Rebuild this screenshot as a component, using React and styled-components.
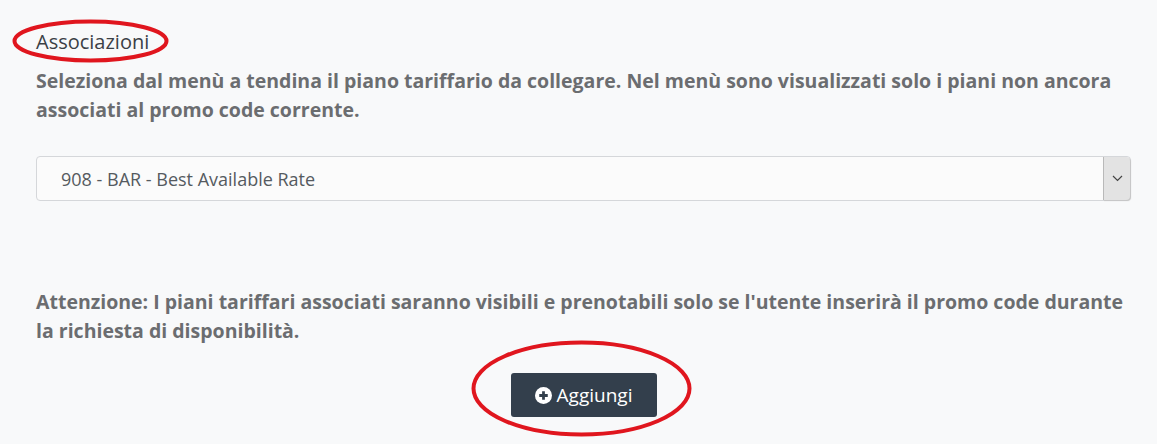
import * as React from "react";
import styled, { createGlobalStyle } from "styled-components";

const GlobalStyle = createGlobalStyle`
  html, body {
    margin: 0;
    padding: 0;
    background-color: #f8f9fa;
  }
  body {
    font-family: "Open Sans", "DejaVu Sans", sans-serif;
  }
`;

const Page = styled.div`
  position: relative;
  width: 1157px;
  height: 444px;
  box-sizing: border-box;
  padding: 27px 26px 0 36px;
  overflow: hidden;
`;

const Title = styled.h4`
  margin: 0 0 10px 0;
  font-size: 20px;
  font-weight: 400;
  line-height: 29px;
  color: #3b4046;
`;

const Note = styled.p`
  margin: ${(props) => props.margin || "0"};
  font-size: 19.5px;
  font-weight: 700;
  line-height: 29px;
  color: #6b6d70;
`;

const SelectWrap = styled.div`
  display: flex;
  margin-top: 32px;
  height: 45px;
  border: 1px solid #d5d7da;
  border-radius: 4px;
  background-color: #fbfbfb;
  box-sizing: border-box;
`;

const SelectValue = styled.div`
  flex: 1;
  display: flex;
  align-items: center;
  padding-left: 24px;
  font-size: 18px;
  color: #555a5f;
`;

const SelectArrow = styled.div`
  width: 26px;
  display: flex;
  align-items: center;
  justify-content: center;
  background-color: #e3e3e3;
  border-left: 1px solid #b9b9b9;
  border-radius: 0 4px 4px 0;
  box-shadow: 1px 1px 1px #c6c6c6;
`;

const Actions = styled.div`
  display: flex;
  justify-content: center;
  margin-top: 28px;
`;

const Button = styled.button`
  display: flex;
  align-items: center;
  justify-content: center;
  gap: 5px;
  width: 146px;
  height: 44px;
  border: none;
  border-radius: 3px;
  background-color: #333f4c;
  color: #ffffff;
  font-family: "Open Sans", sans-serif;
  font-size: 19px;
  padding: 0;
`;

const Mark = styled.svg`
  position: absolute;
  left: ${(props) => props.x}px;
  top: ${(props) => props.y}px;
  pointer-events: none;
`;

const Ellipse = ({ x, y, w, h }) => (
  <Mark x={x} y={y} width={w} height={h} viewBox={`0 0 ${w} ${h}`}>
    <ellipse
      cx={w / 2}
      cy={h / 2}
      rx={w / 2 - 2.5}
      ry={h / 2 - 2.5}
      fill="none"
      stroke="#e0161e"
      strokeWidth="4"
    />
  </Mark>
);

const App = () => (
  <>
    <GlobalStyle />
    <Page>
      <Title>Associazioni</Title>
      <Note>
        Seleziona dal menù a tendina il piano tariffario da collegare. Nel menù
        sono visualizzati solo i piani non ancora associati al promo code
        corrente.
      </Note>
      <SelectWrap>
        <SelectValue>908 - BAR - Best Available Rate</SelectValue>
        <SelectArrow>
          <svg width="11" height="7" viewBox="0 0 11 7">
            <path d="M1 1 L5.5 5.5 L10 1" fill="none" stroke="#444" strokeWidth="1.2" />
          </svg>
        </SelectArrow>
      </SelectWrap>
      <Note margin="86px 0 0 0">
        Attenzione: I piani tariffari associati saranno visibili e prenotabili
        solo se l'utente inserirà il promo code durante la richiesta di
        disponibilità.
      </Note>
      <Actions>
        <Button>
          <svg width="17" height="17" viewBox="0 0 16 16">
            <circle cx="8" cy="8" r="8" fill="#ffffff" />
            <path d="M8 4 V12 M4 8 H12" stroke="#333f4c" strokeWidth="2.6" />
          </svg>
          Aggiungi
        </Button>
      </Actions>
      <Ellipse x={12} y={19} w={157} h={44} />
      <Ellipse x={471} y={340} w={221} h={97} />
    </Page>
  </>
);

export default App;
